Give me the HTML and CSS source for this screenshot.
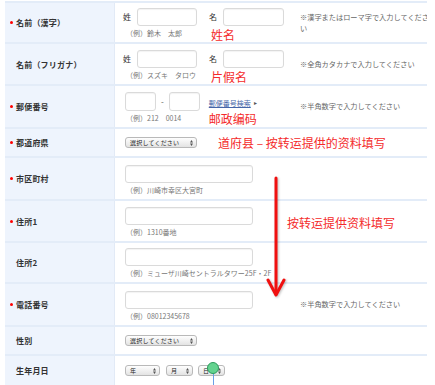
FILE: index.html
```html
<!DOCTYPE html>
<html lang="ja">
<head>
  <meta charset="UTF-8">
  <title>会員情報入力</title>
  <link rel="stylesheet" href="styles.css">
</head>
<body>

<div class="form">

  <!--名前（漢字）-->
  <div class="row h41">
    <div class="label req">名前（漢字）</div>
    <div class="field">
      <div class="pair">
        <div class="line"><span class="cap">姓</span><input class="input w60" type="text"></div>
        <div class="ex">（例）鈴木　太郎</div>
      </div>
      <div class="pair">
        <div class="line"><span class="cap">名</span><input class="input w61" type="text"></div>
        <div class="red" lang="zh-CN">姓名</div>
      </div>
    </div>
    <div class="note">※漢字またはローマ字で入力してください</div>
  </div>

  <!--名前（フリガナ）-->
  <div class="row">
    <div class="label">名前（フリガナ）</div>
    <div class="field">
      <div class="pair">
        <div class="line"><span class="cap">姓</span><input class="input w60" type="text"></div>
        <div class="ex">（例）スズキ　タロウ</div>
      </div>
      <div class="pair">
        <div class="line"><span class="cap">名</span><input class="input w61" type="text"></div>
        <div class="red" lang="zh-CN">片假名</div>
      </div>
    </div>
    <div class="note">※全角カタカナで入力してください</div>
  </div>

  <!--郵便番号-->
  <div class="row h43">
    <div class="label req">郵便番号</div>
    <div class="field zip">
      <div class="pair">
        <div class="line">
          <input class="input w31 h19" type="text">
          <span class="dash">-</span>
          <input class="input w31 h19" type="text">
        </div>
        <div class="ex">（例）212　0014</div>
      </div>
      <div class="pair">
        <div class="line h19"><a class="link" href="#">郵便番号検索</a><span class="tri">▸</span></div>
        <div class="red" lang="zh-CN">邮政编码</div>
      </div>
    </div>
    <div class="note">※半角数字で入力してください</div>
  </div>

  <!--都道府県-->
  <div class="row short">
    <div class="label req">都道府県</div>
    <div class="field">
      <div class="sel w72">選択してください<svg width="3" height="6" viewBox="0 0 3 6"><path d="M0 2.5L1.5 0L3 2.5ZM0 3.5L1.5 6L3 3.5Z" fill="#555"/></svg></div>
      <div class="red pref" lang="zh-CN">道府县 – 按转运提供的资料填写</div>
    </div>
    <div class="note"></div>
  </div>

  <!--市区町村-->
  <div class="row h43">
    <div class="label req">市区町村</div>
    <div class="field">
      <div class="pair">
        <input class="input w128" type="text">
        <div class="ex">（例）川崎市幸区大宮町</div>
      </div>
    </div>
    <div class="note"></div>
  </div>

  <!--住所1-->
  <div class="row">
    <div class="label req">住所1</div>
    <div class="field">
      <div class="pair">
        <input class="input w128" type="text">
        <div class="ex">（例）1310番地</div>
      </div>
      <div class="red addr" lang="zh-CN">按转运提供资料填写</div>
    </div>
    <div class="note"></div>
  </div>

  <!--住所2-->
  <div class="row h41">
    <div class="label">住所2</div>
    <div class="field">
      <div class="pair">
        <input class="input w128" type="text">
        <div class="ex">（例）ミューザ川崎セントラルタワー25F・2F</div>
      </div>
    </div>
    <div class="note"></div>
  </div>

  <!--電話番号-->
  <div class="row h43">
    <div class="label req">電話番号</div>
    <div class="field">
      <div class="pair">
        <input class="input w128" type="text">
        <div class="ex">（例）08012345678</div>
      </div>
    </div>
    <div class="note">※半角数字で入力してください</div>
  </div>

  <!--性別-->
  <div class="row short">
    <div class="label">性別</div>
    <div class="field">
      <div class="sel w72">選択してください<svg width="3" height="6" viewBox="0 0 3 6"><path d="M0 2.5L1.5 0L3 2.5ZM0 3.5L1.5 6L3 3.5Z" fill="#555"/></svg></div>
    </div>
    <div class="note"></div>
  </div>

  <!--生年月日-->
  <div class="row short last">
    <div class="label">生年月日</div>
    <div class="field dates">
      <div class="sel w35">年<svg width="3" height="6" viewBox="0 0 3 6"><path d="M0 2.5L1.5 0L3 2.5ZM0 3.5L1.5 6L3 3.5Z" fill="#555"/></svg></div>
      <div class="sel w27">月<svg width="3" height="6" viewBox="0 0 3 6"><path d="M0 2.5L1.5 0L3 2.5ZM0 3.5L1.5 6L3 3.5Z" fill="#555"/></svg></div>
      <div class="sel w27">日<svg width="3" height="6" viewBox="0 0 3 6"><path d="M0 2.5L1.5 0L3 2.5ZM0 3.5L1.5 6L3 3.5Z" fill="#555"/></svg></div>
    </div>
    <div class="note"></div>
  </div>

  <!--标注：红色箭头-->
  <svg class="arrow" width="24" height="126" viewBox="0 0 24 126">
    <g fill="none" stroke="#f01010" stroke-width="3" stroke-linecap="round" stroke-linejoin="round">
      <path d="M11 3V119"/>
      <path d="M3 105L11 120L19 105"/>
    </g>
  </svg>

  <!--标注：绿点-->
  <span class="pin"></span>
  <span class="pin-line"></span>
</div>

</body>
</html>
```

FILE: styles.css
```css
* {
  margin: 0;
  padding: 0;
  box-sizing: border-box;
}

body {
  font-family: "Noto Sans CJK JP", "Noto Sans", sans-serif;
  color: #333;
  background-color: #fff;
  overflow: hidden;
}

/*整个表格，右边被截掉*/
.form {
  position: relative;
  width: 422px;
  margin: 1px 0 0 5px;
  border-top: 2px solid #e3ecf8;
  overflow: hidden;
}

.row {
  display: grid;
  grid-template-columns: 110px 185px 140px;
  height: 42px;
  border-bottom: 2px solid #e3ecf8;
}

.row.h41 {
  height: 41px;
}

.row.h43 {
  height: 43px;
}

.row.short {
  height: 29px;
}

.row.last {
  border-bottom: 0;
}

/*左边的标题*/
.label {
  display: flex;
  align-items: center;
  padding-left: 11px;
  background-color: #eef4fd;
  border-right: 1px solid #e2eaf6;
  font-size: 8px;
  font-weight: bold;
  letter-spacing: 0.2px;
  white-space: nowrap;
}

.label.req {
  padding-left: 5px;
}

.label.req::before {
  content: "";
  width: 3px;
  height: 3px;
  margin-right: 3px;
  border-radius: 50%;
  background-color: #f00;
}

/*中间的输入部分*/
.field {
  display: flex;
  align-items: flex-start;
  gap: 14px;
  padding: 6px 0 0 10px;
  white-space: nowrap;
}

/*不要让东西被挤小*/
.field > * {
  flex-shrink: 0;
}

.row.h41 .field {
  padding-top: 5px;
}

.row.h43 .field {
  padding-top: 7px;
}

.row.short .field {
  align-items: center;
  padding-top: 0;
}

.pair {
  display: flex;
  flex-direction: column;
}

.line {
  display: flex;
  align-items: center;
  gap: 6px;
}

.line.h19 {
  height: 19px;
  gap: 3px;
}

.cap {
  margin-left: -2px;
  font-size: 8px;
  line-height: 10px;
}

.input {
  display: block;
  flex-shrink: 0;
  height: 18px;
  border: 1px solid #dadada;
  border-radius: 3px;
  background-color: #fff;
  box-shadow: inset 0 1px 1px rgba(0, 0, 0, .05);
  outline: none;
}

.input.h19 {
  height: 19px;
}

.w31 {
  width: 31px;
}

.w60 {
  width: 60px;
}

.w61 {
  width: 61px;
}

.w128 {
  width: 128px;
}

.dash {
  font-size: 8px;
  color: #555;
}

.zip .pair:first-child .line {
  gap: 5px;
}

.zip .pair:first-child {
  margin-top: -1px;
}

.zip {
  gap: 9px;
}

.ex {
  margin-top: 2px;
  padding-left: 1px;
  font-size: 7px;
  line-height: 10px;
  color: #777;
}

.link {
  font-size: 7px;
  line-height: 10px;
  color: #4565a8;
  text-decoration: underline;
}

.tri {
  font-size: 6px;
  color: #555;
}

/*红色的标注文字*/
.red {
  margin-top: 2px;
  font-family: "Noto Sans CJK SC", sans-serif;
  font-size: 12px;
  line-height: 13px;
  color: #f42a2a;
}

.zip .red {
  margin-top: 0;
}

.red.pref {
  margin: 0 0 0 7px;
}

.red.addr {
  margin: 9px 0 0 20px;
}

/*假的下拉框*/
.sel {
  display: flex;
  align-items: center;
  justify-content: space-between;
  height: 11px;
  padding: 0 3px 0 4px;
  border: 1px solid #b9b9b9;
  border-radius: 3px;
  background: linear-gradient(#fefefe, #e3e3e3);
  font-size: 6px;
  line-height: 9px;
  letter-spacing: 0.2px;
  color: #222;
}

.w72 {
  width: 72px;
}

.w35 {
  width: 35px;
}

.w27 {
  width: 27px;
}

.dates {
  gap: 5px;
}

.dates .sel:first-child {
  margin-right: 1px;
}

/*右边的说明*/
.note {
  display: flex;
  align-items: center;
  padding-right: 8px;
  font-size: 7.2px;
  line-height: 11px;
  color: #666;
}

/*标注层*/
.arrow {
  position: absolute;
  left: 260px;
  top: 172px;
  filter: drop-shadow(1px 1px 1px rgba(0, 0, 0, .25));
}

.pin {
  position: absolute;
  left: 202px;
  top: 359px;
  width: 12px;
  height: 12px;
  border: 1px solid #2b9a5c;
  border-radius: 50%;
  background-color: #64d38f;
}

.pin-line {
  position: absolute;
  left: 208px;
  top: 371px;
  width: 1px;
  height: 15px;
  background-color: #6b9fe6;
}
```
